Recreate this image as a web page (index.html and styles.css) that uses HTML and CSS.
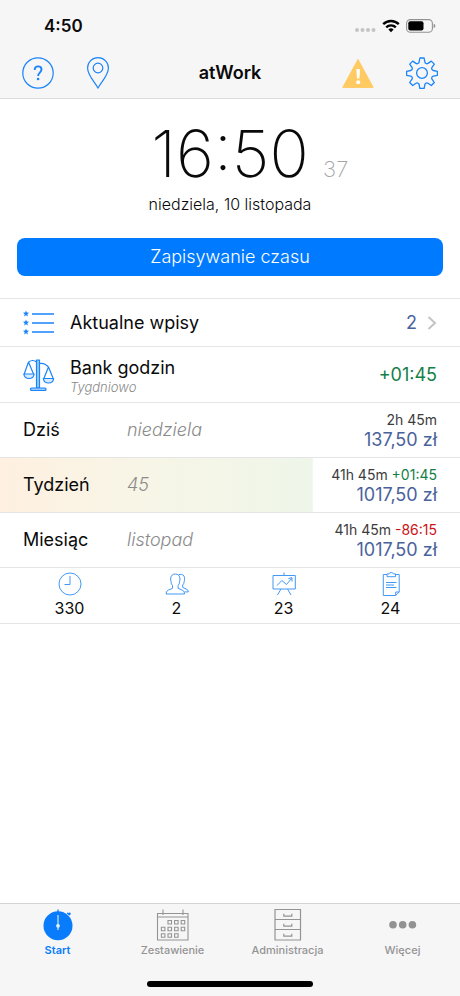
FILE: index.html
```html
<!DOCTYPE html>
<html lang="pl">
<head>
<meta charset="utf-8">
<meta name="viewport" content="width=device-width, initial-scale=1">
<title>atWork</title>
<link rel="stylesheet" href="styles.css">
</head>
<body>
<header class="top">
  <div class="status">
    <span class="status-time">4:50</span>
    <span class="status-icons">
      <svg width="22" height="6" viewBox="0 0 22 6" fill="#c4c4c6"><circle cx="3" cy="3" r="2"/><circle cx="8.5" cy="3" r="2"/><circle cx="14" cy="3" r="2"/><circle cx="19.5" cy="3" r="2"/></svg>
      <svg width="18" height="14" viewBox="0 0 18 14" fill="none" stroke="#000" stroke-width="2.4"><path d="M1.2 5.1a11.2 11.2 0 0 1 15.6 0"/><path d="M4.2 8.3a6.9 6.9 0 0 1 9.6 0"/><path d="M6.4 10.6a3.7 3.7 0 0 1 5.2 0L9 13.2z" fill="#000" stroke="none"/></svg>
      <svg width="30" height="14" viewBox="0 0 30 14"><rect x=".6" y=".6" width="25.8" height="12.6" rx="3.8" fill="none" stroke="#929294" stroke-width="1.1"/><rect x="2.3" y="2.3" width="15.2" height="9.3" rx="2"/><path d="M27.6 4.8q1.8.6 1.8 2.2t-1.8 2.2z" fill="#929294"/></svg>
    </span>
  </div>
  <nav class="nav">
    <div class="nav-side">
      <button class="icon-button" aria-label="Pomoc">
        <svg width="32" height="32" viewBox="0 0 32 32" fill="none" stroke="#1a84fa" stroke-width="1.2"><circle cx="16" cy="16" r="15.2"/><path d="M12.7 13.1c0-2.3 1.4-3.7 3.4-3.7s3.4 1.3 3.4 3.2c0 3-3.4 3.1-3.4 6.4" stroke-width="1.9"/><circle cx="16.1" cy="22" r="1.3" fill="#1a84fa" stroke="none"/></svg>
      </button>
      <button class="icon-button" aria-label="Lokalizacja">
        <svg width="24" height="32" viewBox="0 0 24 32" fill="none" stroke="#1a84fa" stroke-width="1.2"><path d="M12 31C8 24 1.6 18 1.6 10.9a10.4 10.2 0 0 1 20.8 0C22.4 18 16 24 12 31z"/><circle cx="12" cy="11" r="4.8"/></svg>
      </button>
    </div>
    <h1 class="title">atWork</h1>
    <div class="nav-side nav-side-end">
      <button class="icon-button" aria-label="Ostrzeżenie">
        <svg width="32" height="32" viewBox="0 0 32 32"><path d="M16 2.4 31.2 30.4H.8z" fill="#ffca62" stroke="#ffca62" stroke-width="1" stroke-linejoin="round"/><path d="M14.3 12h3.8l-.7 9.6H15z" fill="#fff"/><circle cx="16.2" cy="25.2" r="2" fill="#fff"/></svg>
      </button>
      <button class="icon-button" aria-label="Ustawienia">
        <svg width="32" height="32" viewBox="0 0 32 32" fill="none" stroke="#1a84fa" stroke-width="1.3" stroke-linejoin="round"><path d="M13.9 1h4.2l.8 4.1q.2 1 1.2 1.4 1 .5 1.9-.1l3.3-2.3 3 3-2.3 3.3q-.6.9-.1 1.9.4 1 1.4 1.2l4.1.8v4l-4.1.8q-1 .2-1.4 1.2-.5 1 .1 1.9l2.3 3.3-3 3-3.3-2.3q-.9-.6-1.9-.1-1 .4-1.2 1.4l-.8 4h-4.2l-.8-4q-.2-1-1.2-1.4-1-.5-1.9.1l-3.3 2.3-3-3L6 22.2q.6-.9.1-1.9-.4-1-1.4-1.2l-4.1-.8v-4l4.1-.8q1-.2 1.4-1.2.5-1-.1-1.9L3.7 7.1l3-3L10 6.4q.9.6 1.9.1 1-.4 1.2-1.4z"/><circle cx="16" cy="16" r="5.4"/></svg>
      </button>
    </div>
  </nav>
</header>

<main class="content">
  <section class="clock">
    <div class="clock-time"><span class="clock-balance"></span><time class="clock-main">16:50</time><span class="clock-seconds">37</span></div>
    <p class="clock-date">niedziela, 10 listopada</p>
    <button class="record">Zapisywanie czasu</button>
  </section>

  <ul class="rows">
    <li>
      <a class="row row-link" href="#entries">
        <svg class="row-icon" width="32" height="26" viewBox="0 0 32 26"><g fill="#1a84fa"><path id="star" d="M3 .4l.8 2.2 2.3.1-1.8 1.5.6 2.3L3 5.2 1.1 6.5l.6-2.3L-.1 2.7l2.3-.1z"/><use href="#star" y="9"/><use href="#star" y="18"/></g><path d="M9 4H31M9 13H31M9 22H31" stroke="#1a84fa" stroke-width="1.4"/></svg>
        <span class="row-title">Aktualne wpisy</span>
        <span class="amount">2</span>
        <svg class="chevron" width="10" height="14" viewBox="0 0 10 14" fill="none" stroke="#c4c4c8" stroke-width="2"><path d="M1.5 1 8 7l-6.5 6"/></svg>
      </a>
    </li>
    <li class="row">
      <svg class="row-icon" width="32" height="34" viewBox="0 0 32 34" fill="none" stroke="#1a84fa" stroke-width="1.2" stroke-linejoin="round"><rect x="13.5" y="2" width="3" height="28" fill="#9ccbfd"/><rect x="7.5" y="30" width="15.5" height="2.5" rx="1" fill="#9ccbfd"/><path d="M13.5 4Q10 1 5.5 4M16.5 5.5q5-1 9 3.5M5.5 4 1.2 16M5.5 4l5 12M25.5 9l-4.500 11M25.5 9l4.500 11"/><path d="M.8 16h10.4q-.6 4.5-5.2 4.5T.8 16zM20.300 20.500h10.400q-.6 4.500-5.200 4.500t-5.200-4.500z" fill="#d8eafe"/></svg>
      <span class="row-title">Bank godzin<small class="row-note">Tygdniowo</small></span>
      <span class="plus">+01:45</span>
    </li>
    <li class="row row-period">
      <span class="period">Dziś</span><em class="period-name">niedziela</em>
      <span class="totals"><span class="duration">2h 45m</span><span class="amount">137,50 zł</span></span>
    </li>
    <li class="row row-period row-week">
      <span class="period">Tydzień</span><em class="period-name">45</em>
      <span class="totals"><span class="duration">41h 45m <span class="plus">+01:45</span></span><span class="amount">1017,50 zł</span></span>
    </li>
    <li class="row row-period">
      <span class="period">Miesiąc</span><em class="period-name">listopad</em>
      <span class="totals"><span class="duration">41h 45m <span class="minus">-86:15</span></span><span class="amount">1017,50 zł</span></span>
    </li>
  </ul>

  <section class="stats">
    <div class="stat">
      <svg width="24" height="24" viewBox="0 0 24 24" fill="none" stroke="#4298f5"><circle cx="12" cy="12" r="11"/><path d="M12 4v8.5H6.5"/></svg>
      <span>330</span>
    </div>
    <div class="stat">
      <svg width="24" height="24" viewBox="0 0 24 24" fill="none" stroke="#4298f5" stroke-linejoin="round"><path d="M1 22q0-3 2.5-4l4-1.600v-2.900Q6 12 6 9.500L5.600 7q.3-5 4.700-5t4.700 5l-.4 2.500q0 2.500-1.500 4v2.900l4 1.600q2.500 1 2.500 4z"/><path d="M13.600 2.800Q15 2 16.300 2.400 20 3 19.600 7.500l-.4 2q-.2 2.300-1.500 3.500v2.500l3.300 1.400q2.400 1 2.400 3h-3.900"/></svg>
      <span>2</span>
    </div>
    <div class="stat">
      <svg width="24" height="24" viewBox="0 0 24 24" fill="none" stroke="#4298f5"><path d="M1 3.500h22.300V17H1zM12 .5v3M9 17l-3.500 6M15.500 17l3.500 6M5 13.500l4.800-5 4.700 4 5.200-6.200M16.500 6.500l3.500-.8v3.800"/></svg>
      <span>23</span>
    </div>
    <div class="stat">
      <svg width="24" height="24" viewBox="0 0 24 24" fill="none" stroke="#4298f5" stroke-linejoin="round"><path d="M8 2.500H4.300v21h12.400l3.500-3.500V2.500h-3.700M16.700 23.500V20h3.500M8 4.700V1.900h2q.3-1.400 2.200-1.400t2.200 1.400h2.100v2.800zM7 10.500h10.500M7 13h8M7 15.500h10.500"/></svg>
      <span>24</span>
    </div>
  </section>
</main>

<footer class="bottom">
  <nav class="tabs">
    <a class="tab tab-active" href="#start">
      <svg width="34" height="34" viewBox="0 0 34 34"><circle cx="17" cy="17.8" r="14.5" fill="#087cfb"/><path d="M17 1.500v3M26 5l3 2" stroke="#087cfb" stroke-width="1.3"/><circle cx="28.500" cy="5.800" r="1.200" fill="#087cfb"/><path d="M17 7v15" stroke="#bfe0ff" stroke-width="1.3"/><circle cx="17" cy="17.8" r="1.9" fill="#e2f2ff"/></svg>
      <span>Start</span>
    </a>
    <a class="tab" href="#report">
      <svg width="34" height="34" viewBox="0 0 34 34" fill="none" stroke="#949494" stroke-width="1.1"><path d="M1.500 5.500H32V32H1.500zM1.500 9H32M7 1.500v5.500M27 1.500v5.500"/><path d="M12 12.500h3.500v3.500H12zM18.600 12.500h3.500v3.500h-3.500zM25.200 12.500h3.500v3.500h-3.500zM5.400 19.200h3.500v3.500H5.400zM12 19.200h3.500v3.500H12zM18.600 19.200h3.500v3.500h-3.500zM25.200 19.200h3.500v3.500h-3.500zM5.400 25.800h3.500v3.500H5.400zM12 25.800h3.500v3.500H12zM18.600 25.800h3.500v3.500h-3.500z"/></svg>
      <span>Zestawienie</span>
    </a>
    <a class="tab" href="#admin">
      <svg width="34" height="34" viewBox="0 0 34 34" fill="none" stroke="#949494" stroke-width="1.2"><path d="M4 1.500h25.500v30.500H4zM4 11.500h25.500M4 21.500h25.500M12.800 5.800v2.300h8V5.800M12.800 15.800v2.300h8v-2.300M12.800 25.800v2.300h8v-2.300"/></svg>
      <span>Administracja</span>
    </a>
    <a class="tab" href="#more">
      <svg width="34" height="34" viewBox="0 0 34 34" fill="#929292"><circle cx="7" cy="16.8" r="3.8"/><circle cx="16.7" cy="16.8" r="3.8"/><circle cx="26.4" cy="16.8" r="3.8"/></svg>
      <span>Więcej</span>
    </a>
  </nav>
  <div class="home-bar"></div>
</footer>
</body>
</html>
```
FILE: styles.css
```css
* {
  box-sizing: border-box;
}

body {
  display: flex;
  flex-direction: column;
  min-height: 100vh;
  margin: 0;
  background: #fff;
  color: #0a0a0a;
  font-family: Inter, "Liberation Sans", sans-serif;
  font-size: 18px;
  line-height: 24px;
}

button {
  border: 0;
  font: inherit;
  cursor: pointer;
}

a {
  color: inherit;
  text-decoration: none;
}

svg {
  display: block;
  flex: none;
}

.top {
  background: #f7f6f7;
  border-bottom: 1px solid #dcdcde;
}

.status {
  display: flex;
  justify-content: space-between;
  align-items: center;
  padding: 14px 24px 10px 44px;
}

.status-time {
  font-size: 17px;
  font-weight: 600;
}

.status-icons {
  display: flex;
  align-items: center;
  gap: 6px;
}

.status-icons svg:first-child {
  margin-top: 8px;
}

.nav {
  display: flex;
  align-items: center;
  height: 50px;
  padding: 0 22px;
}

.nav-side {
  display: flex;
  flex: 1;
  gap: 32px;
}

.nav-side-end {
  justify-content: flex-end;
}

.icon-button {
  padding: 0;
  background: none;
}

.title {
  margin: 0;
  font-size: 18px;
  font-weight: 600;
}

.content {
  flex: 1;
}

.clock {
  padding: 23px 17px 22px;
  text-align: center;
}

.clock-time {
  display: flex;
  justify-content: center;
  align-items: baseline;
  gap: 14px;
}

.clock-balance,
.clock-seconds {
  width: 26px;
}

.clock-main {
  font-size: 65px;
  font-weight: 200;
  line-height: 64px;
}

.clock-seconds {
  color: #a4a4a4;
  font-size: 22px;
  font-weight: 200;
}

.clock-date {
  margin: 6px 0 22px;
  font-size: 16px;
  font-weight: 300;
}

.record {
  display: block;
  width: 100%;
  height: 38px;
  border-radius: 8px;
  background: #007aff;
  color: #fff;
  font-weight: 300;
}

.rows {
  margin: 0;
  padding: 0;
  border-top: 1px solid #e4e4e6;
  list-style: none;
}

.row {
  display: flex;
  align-items: center;
  min-height: 56px;
  padding: 0 23px;
  border-bottom: 1px solid #e4e4e6;
}

.row-link {
  min-height: 48px;
}

.row-icon {
  margin-right: 15px;
}

.row-title {
  flex: 1;
}

.row-note {
  display: block;
  color: #8a8a8a;
  font-size: 13px;
  font-style: italic;
  font-weight: 300;
  line-height: 14px;
}

.chevron {
  margin-left: 10px;
}

.amount {
  color: #4a629c;
}

.plus {
  color: #138048;
}

.minus {
  color: #cc1418;
}

.row-period {
  min-height: 55px;
}

.period {
  width: 104px;
}

.period-name {
  flex: 1;
  color: #8a8a8a;
  font-weight: 300;
}

.row-week {
  background: linear-gradient(90deg, #fff0e0, #f8f5e6 40%, #eef6e9) no-repeat left / 68% 100%;
}

.totals {
  display: flex;
  flex-direction: column;
  align-items: flex-end;
  line-height: 20px;
}

.duration {
  color: #3c3c3c;
  font-size: 14px;
}

.stats {
  display: grid;
  grid-template-columns: repeat(4, 1fr);
  padding: 4px 16px 3px;
  border-bottom: 1px solid #e4e4e6;
}

.stat {
  display: flex;
  flex-direction: column;
  align-items: center;
  font-size: 16px;
}

.bottom {
  background: #f7f6f7;
  border-top: 1px solid #d4d4d6;
}

.tabs {
  display: grid;
  grid-template-columns: repeat(4, 1fr);
}

.tab {
  display: flex;
  flex-direction: column;
  align-items: center;
  padding-top: 4px;
  color: #949494;
  font-size: 11px;
  font-weight: 500;
  line-height: 16px;
}

.tab-active {
  color: #087cfb;
  font-weight: 600;
}

.home-bar {
  width: 36%;
  height: 6px;
  margin: 23px auto 9px;
  border-radius: 3px;
  background: #000;
}
```
